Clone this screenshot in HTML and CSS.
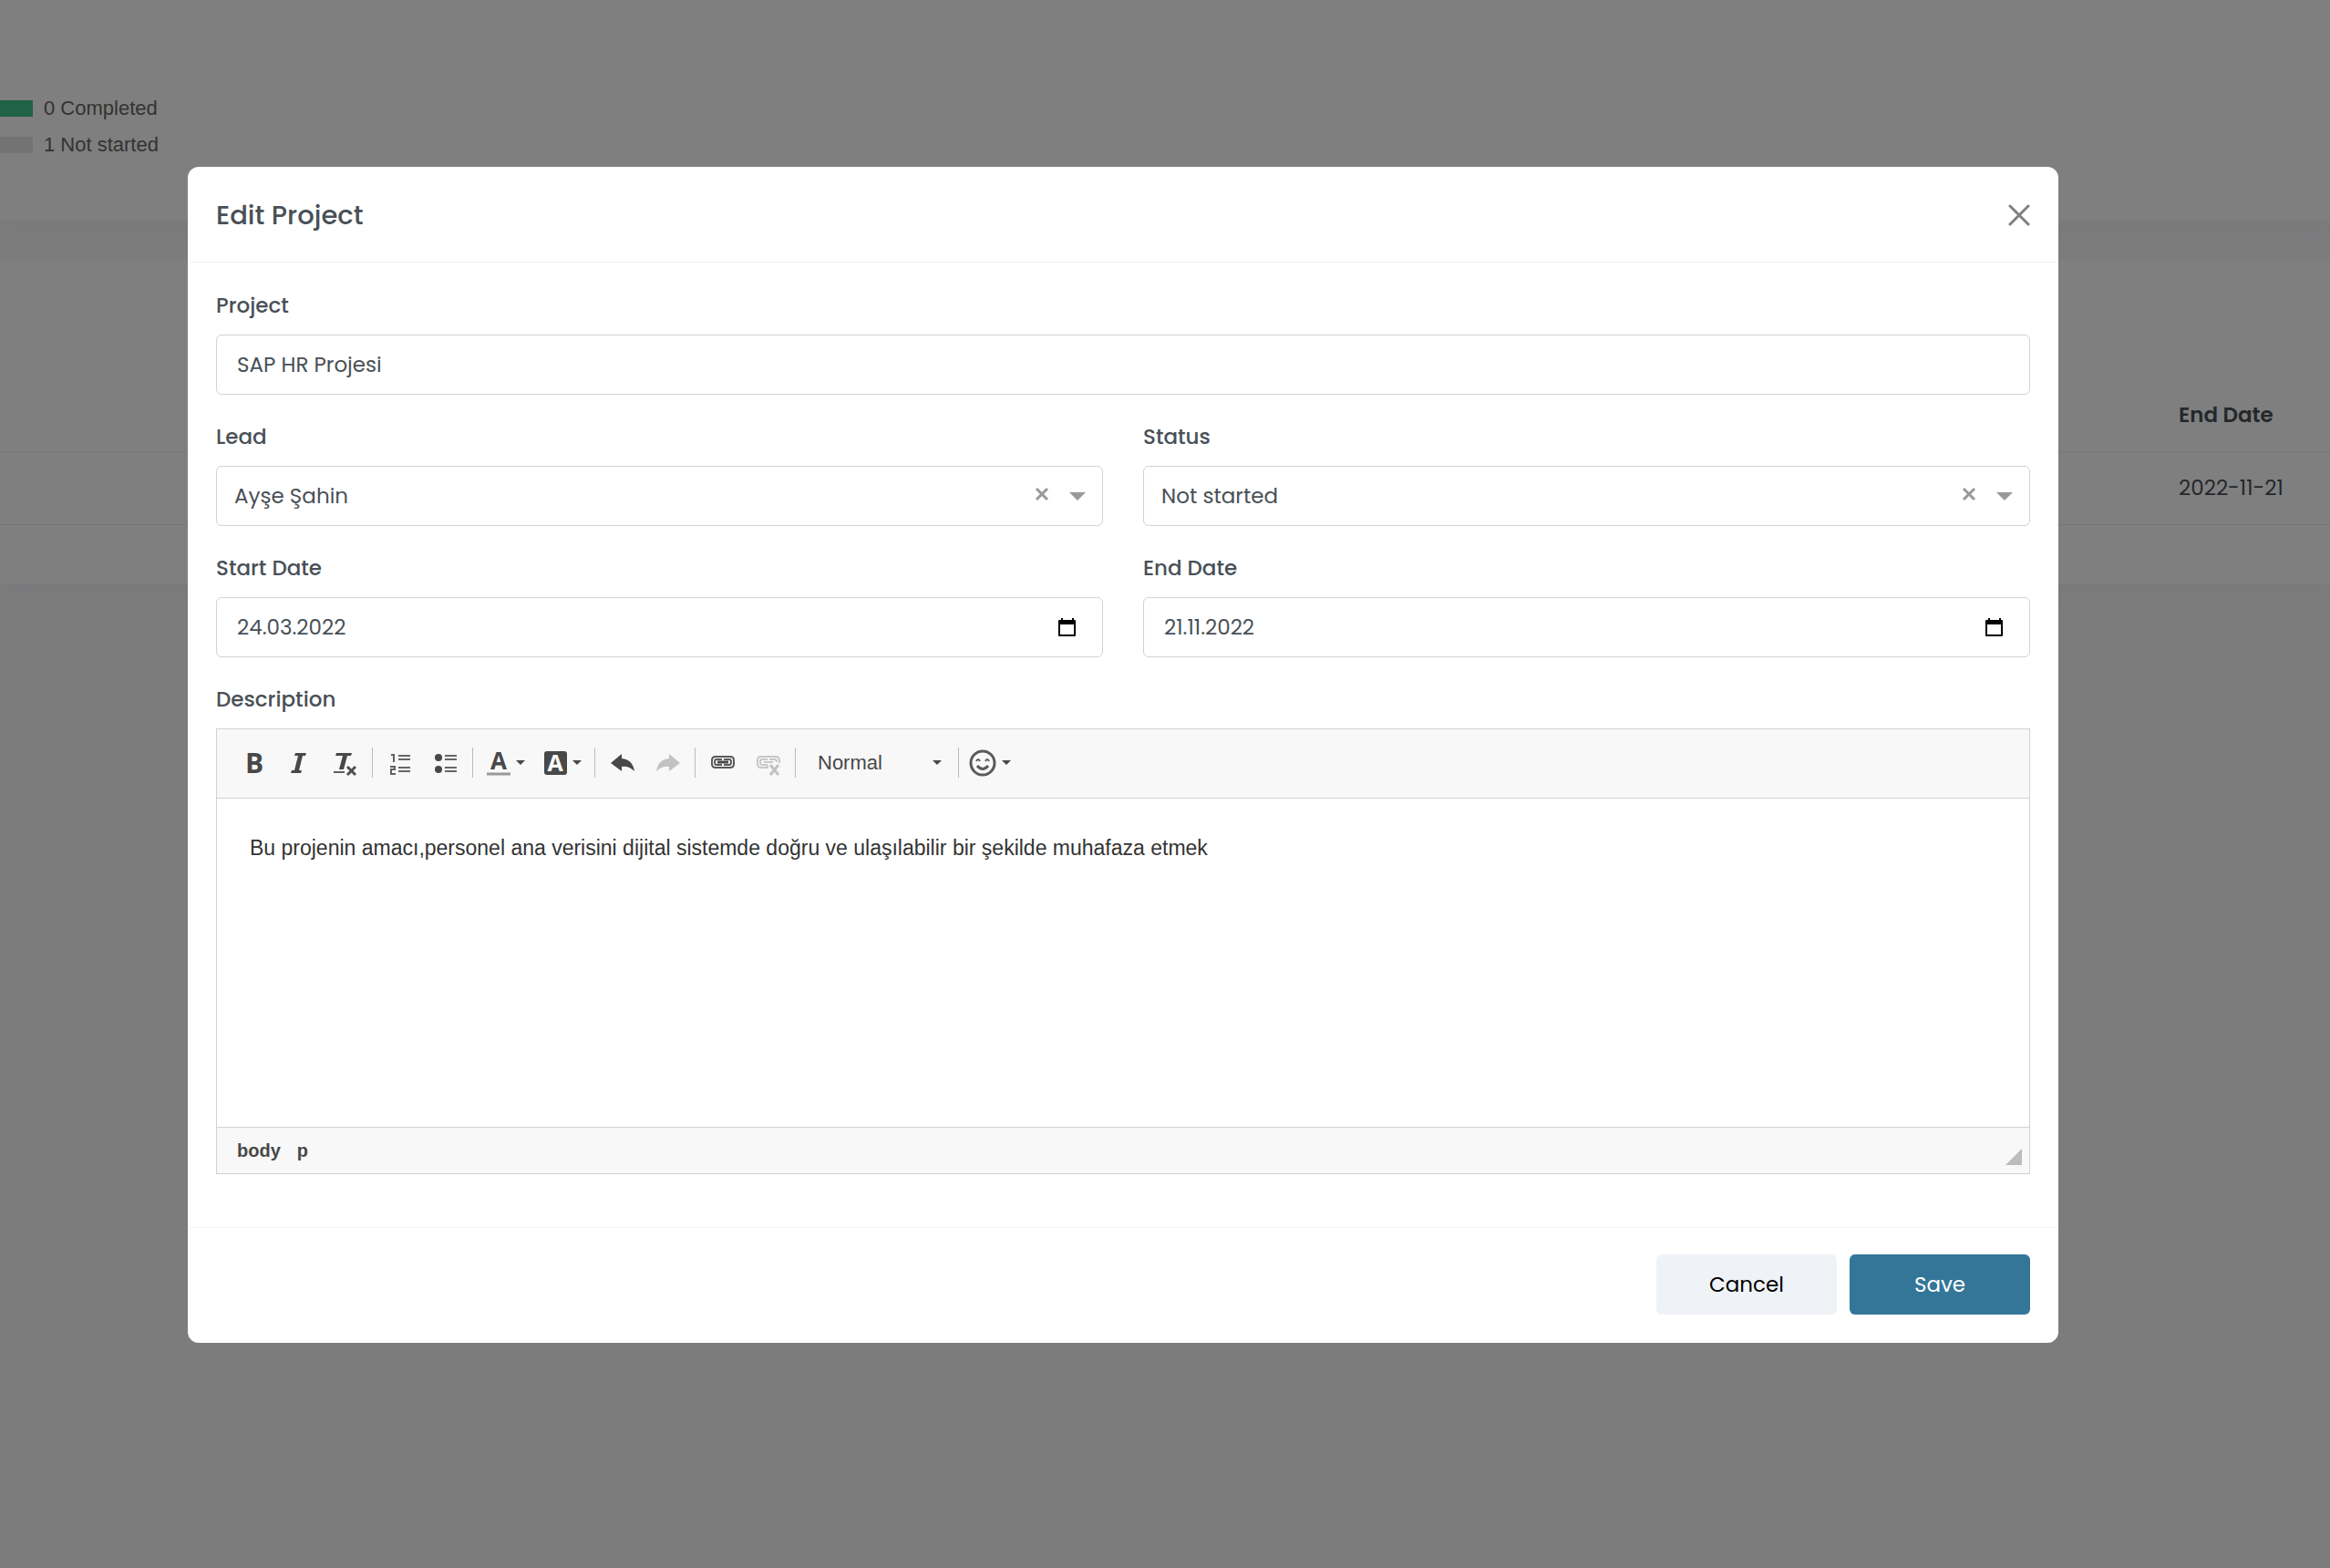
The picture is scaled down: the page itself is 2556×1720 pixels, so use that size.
FILE: index.html
```html
<!DOCTYPE html>
<html lang="en">
<head>
<meta charset="utf-8">
<title>Edit Project</title>
<link rel="stylesheet" href="styles.css">
</head>
<body>
<main class="page">
  <section class="card card-summary">
    <ul class="legend">
      <li><span class="swatch swatch-done"></span>0 Completed</li>
      <li><span class="swatch swatch-idle"></span>1 Not started</li>
    </ul>
  </section>
  <section class="card card-table">
    <table class="projects">
      <thead><tr><td></td><th scope="col">End Date</th></tr></thead>
      <tbody><tr><td></td><td>2022-11-21</td></tr></tbody>
    </table>
  </section>
</main>

<div class="backdrop">
  <form class="modal" role="dialog" aria-labelledby="modal-title">
    <header class="modal-header">
      <h1 id="modal-title">Edit Project</h1>
      <button type="button" class="close" aria-label="Close">
        <svg width="24" height="24" viewBox="0 0 24 24"><path d="M2 2 22 22M22 2 2 22" stroke="#7f7f7f" stroke-width="3" stroke-linecap="round"/></svg>
      </button>
    </header>

    <div class="modal-body">
      <div class="field field-wide">
        <label for="project">Project</label>
        <div class="control"><input id="project" type="text" value="SAP HR Projesi"></div>
      </div>
      <div class="field">
        <label for="lead">Lead</label>
        <div class="control control-select">
          <select id="lead"><option>Ayşe Şahin</option></select>
          <button type="button" class="clear" aria-label="Clear lead"><svg width="16" height="16" viewBox="0 0 16 16"><path d="M2 2 14 14M14 2 2 14" stroke="#999" stroke-width="3"/></svg></button>
          <svg class="arrow" width="18" height="9" viewBox="0 0 18 9"><path d="M0 0H18L9 9Z" fill="#999"/></svg>
        </div>
      </div>
      <div class="field">
        <label for="status">Status</label>
        <div class="control control-select">
          <select id="status"><option>Not started</option></select>
          <button type="button" class="clear" aria-label="Clear status"><svg width="16" height="16" viewBox="0 0 16 16"><path d="M2 2 14 14M14 2 2 14" stroke="#999" stroke-width="3"/></svg></button>
          <svg class="arrow" width="18" height="9" viewBox="0 0 18 9"><path d="M0 0H18L9 9Z" fill="#999"/></svg>
        </div>
      </div>
      <div class="field">
        <label for="start">Start Date</label>
        <div class="control control-date">
          <input id="start" type="text" value="24.03.2022">
          <button type="button" aria-label="Pick start date"><svg width="20" height="20" viewBox="0 0 20 20"><path fill-rule="evenodd" d="M3 0H5V2H15V0H17V2H18Q19 2 19 3V19Q19 20 18 20H1Q0 20 0 19V3Q0 2 1 2H3ZM2 7V18H17V7Z"/></svg></button>
        </div>
      </div>
      <div class="field">
        <label for="end">End Date</label>
        <div class="control control-date">
          <input id="end" type="text" value="21.11.2022">
          <button type="button" aria-label="Pick end date"><svg width="20" height="20" viewBox="0 0 20 20"><path fill-rule="evenodd" d="M3 0H5V2H15V0H17V2H18Q19 2 19 3V19Q19 20 18 20H1Q0 20 0 19V3Q0 2 1 2H3ZM2 7V18H17V7Z"/></svg></button>
        </div>
      </div>
      <div class="field field-wide">
        <label for="description">Description</label>
        <div class="editor">
          <div class="toolbar" role="toolbar" aria-label="Formatting">
            <button type="button" class="tool" aria-label="Bold"><svg class="icon" viewBox="0 0 26 26"><text class="glyph" x="13" y="24" text-anchor="middle" font-size="30">B</text></svg></button>
            <button type="button" class="tool" aria-label="Italic"><svg class="icon" viewBox="0 0 26 26"><path d="M8 2H20L19 5H16L12 21H15L14 24H3L4 21H7L11 5H7Z" fill="#484848"/></svg></button>
            <button type="button" class="tool" aria-label="Remove format"><svg class="icon" viewBox="0 0 26 26"><path d="M3 2H20L19 5H15L11 20H6L10 5H2Z" fill="#484848"/><path d="M0 23H12" stroke="#606060" stroke-width="2"/><path d="M15 17 24 26M24 17 15 26" stroke="#505050" stroke-width="3"/></svg></button>
            <span class="sep"></span>
            <button type="button" class="tool" aria-label="Numbered list"><svg class="icon" viewBox="0 0 26 26"><path d="M3 4H6V12M2 17H7V20H3V25H8" fill="none" stroke="#606060" stroke-width="2"/><path d="M11 5H24M11 9H24M11 18H24M11 22H24" stroke="#666" stroke-width="2"/></svg></button>
            <button type="button" class="tool" aria-label="Bulleted list"><svg class="icon" viewBox="0 0 26 26"><circle cx="5" cy="7" r="4" fill="#484848"/><circle cx="5" cy="20" r="4" fill="#484848"/><path d="M12 5H25M12 9H25M12 18H25M12 22H25" stroke="#666" stroke-width="2"/></svg></button>
            <span class="sep"></span>
            <button type="button" class="tool tool-menu" aria-label="Text color"><svg class="icon" viewBox="0 0 26 26"><text class="glyph" x="13" y="20" text-anchor="middle" font-size="26">A</text><path d="M0 25H26" stroke="#999" stroke-width="3"/></svg><svg class="caret" viewBox="0 0 10 6"><path d="M0 0H10L5 5Z"/></svg></button>
            <button type="button" class="tool tool-menu" aria-label="Background color"><svg class="icon" viewBox="0 0 26 26"><rect x="1" y="0" width="25" height="26" rx="3" fill="#484848"/><text class="glyph glyph-light" x="13" y="22" text-anchor="middle" font-size="25">A</text></svg><svg class="caret" viewBox="0 0 10 6"><path d="M0 0H10L5 5Z"/></svg></button>
            <span class="sep"></span>
            <button type="button" class="tool" aria-label="Undo"><svg class="icon" viewBox="0 0 26 26"><path d="M0 13 12 3V8Q24 9 26 22Q20 16 12 17V22Z" fill="#484848"/></svg></button>
            <button type="button" class="tool" aria-label="Redo" disabled><svg class="icon" viewBox="0 0 26 26"><path d="M26 13 14 3V8Q2 9 0 22Q6 16 14 17V22Z" fill="#c2c2c2"/></svg></button>
            <span class="sep"></span>
            <button type="button" class="tool" aria-label="Link"><svg class="icon" viewBox="0 0 26 26"><g fill="none" stroke="#5a5a5a" stroke-width="2"><path d="M12 7V6H5Q1 6 1 10V14Q1 18 5 18H12V17M14 7V6H21Q25 6 25 10V14Q25 18 21 18H14V17"/><path d="M12 9H6Q4 9 4 12T6 15H12M14 9H20Q22 9 22 12T20 15H14"/></g><path d="M7 12H19" stroke="#484848" stroke-width="3"/></svg></button>
            <button type="button" class="tool" aria-label="Unlink" disabled><svg class="icon" viewBox="0 0 26 26"><g fill="none" stroke="#c8c8c8" stroke-width="2"><path d="M12 7V6H5Q1 6 1 10V14Q1 18 5 18H12V16M14 7V6H21Q25 6 25 10V13M12 9H6Q4 9 4 12T6 15H12M14 9H20Q22 9 22 12M8 12H18"/></g><path d="M15 15 24 26M24 15 15 26" stroke="#c2c2c2" stroke-width="3"/></svg></button>
            <span class="sep"></span>
            <div class="format">
              <select aria-label="Paragraph format"><option>Normal</option></select>
              <svg class="caret" viewBox="0 0 10 6"><path d="M0 0H10L5 5Z"/></svg>
            </div>
            <span class="sep"></span>
            <button type="button" class="tool tool-menu tool-emoji" aria-label="Emoji"><svg class="icon icon-smile" viewBox="0 0 30 30"><g fill="none" stroke="#5a5a5a"><circle cx="15" cy="15" r="13" stroke-width="3"/><path d="M8 13Q10 9 12 13M18 13Q20 9 22 13" stroke-width="2"/><path d="M9 18Q15 25 21 18" stroke-width="3"/></g></svg><svg class="caret" viewBox="0 0 10 6"><path d="M0 0H10L5 5Z"/></svg></button>
          </div>
          <textarea id="description" spellcheck="false">Bu projenin amacı,personel ana verisini dijital sistemde doğru ve ulaşılabilir bir şekilde muhafaza etmek</textarea>
          <div class="path-bar">
            <a href="#body">body</a>
            <a href="#p">p</a>
            <svg class="grip" width="18" height="18" viewBox="0 0 18 18"><path d="M18 0V18H0Z" fill="#bcbcbc"/></svg>
          </div>
        </div>
      </div>
    </div>

    <footer class="modal-footer">
      <button type="button" class="btn btn-light">Cancel</button>
      <button type="submit" class="btn btn-primary">Save</button>
    </footer>
  </form>
</div>
</body>
</html>
```

FILE: styles.css
```css
* { box-sizing: border-box; }

body {
  margin: 0;
  min-height: 100vh;
  background: #f8f8fb;
  color: #495057;
  font: 400 23px/36px Poppins, Inter, sans-serif;
}

button, input, select, textarea { font: inherit; color: inherit; }

button {
  padding: 0;
  border: 0;
  background: none;
  cursor: pointer;
}

svg { display: block; }

/* Page behind the dialog */
.card { background: #fff; box-shadow: 0 12px 24px rgba(18, 38, 63, 0.02); }
.card-summary { height: 242px; padding-top: 101px; }
.card-table { margin-top: 43px; padding: 130px 0 65px; }

.legend {
  display: grid;
  gap: 4px;
  margin: 0;
  padding: 0;
  list-style: none;
  color: #666;
  font: 22px/36px "Liberation Sans", Arial, sans-serif;
}
.legend li { display: flex; align-items: center; gap: 12px; }
.swatch { width: 36px; height: 18px; }
.swatch-done { background: #3fc48f; }
.swatch-idle { background: #e6e6e6; }

.projects { width: 100%; border-collapse: collapse; }
.projects th, .projects td {
  height: 80px;
  padding: 0;
  border-bottom: 1px solid #e9edf3;
  text-align: left;
}
.projects th { width: 166px; font-weight: 600; }

/* Dialog */
.backdrop {
  position: fixed;
  inset: 0;
  overflow: auto;
  padding: 183px 298px 0 206px;
  background: rgba(0, 0, 0, 0.5);
}
.modal {
  border: 2px solid #fff;
  border-radius: 12px;
  background: #fff;
}
.modal-header {
  display: flex;
  align-items: center;
  justify-content: space-between;
  height: 103px;
  padding: 0 29px;
  border-bottom: 1px solid #f0f0f3;
}
.modal-header h1 { margin: 0; font-size: 29px; font-weight: 500; }

.modal-body {
  display: grid;
  grid-template-columns: 1fr 1fr;
  gap: 28px 44px;
  padding: 29px 29px 58px;
}
.field-wide { grid-column: 1 / -1; }
.field > label { display: block; margin-bottom: 14px; font-weight: 500; }

.control {
  display: flex;
  align-items: center;
  height: 66px;
  border: 1px solid #ced4da;
  border-radius: 6px;
  background: #fff;
}
.control input, .control select {
  flex: 1;
  min-width: 0;
  height: 100%;
  padding: 0 22px;
  border: 0;
  outline: 0;
  background: none;
}
.control select { appearance: none; padding: 0 19px; }
.control-select { gap: 22px; padding-right: 18px; }
.control-date { padding-right: 28px; }
.control-date svg { fill: #000; }
.clear { padding-bottom: 4px; }

/* Rich text editor */
.editor {
  border: 1px solid #d1d1d1;
  font: 23px/36px "Liberation Sans", Arial, sans-serif;
}
.toolbar {
  display: flex;
  align-items: center;
  height: 76px;
  padding: 0 16px 2px;
  border-bottom: 1px solid #d1d1d1;
  background: #f8f8f8;
}
.tool { display: flex; align-items: center; justify-content: center; width: 50px; height: 50px; }
.tool-menu { gap: 6px; width: 62px; }
.tool-emoji { width: 58px; }
.icon { width: 26px; height: 26px; overflow: visible; }
.icon-smile { width: 30px; height: 30px; }
.caret { width: 10px; height: 6px; fill: #484848; }
.glyph { fill: #484848; font-family: "Open Sans", sans-serif; font-weight: 700; }
.glyph-light { fill: #f8f8f8; }
.sep { width: 1px; height: 33px; margin: 0 5px 0 4px; background: #bcbcbc; }
.format { display: flex; align-items: center; width: 169px; padding: 0 14px 0 19px; color: #484848; font-size: 22px; }
.format select {
  flex: 1;
  min-width: 0;
  padding: 0;
  appearance: none;
  border: 0;
  background: none;
}
.editor textarea {
  display: block;
  width: 100%;
  height: 360px;
  padding: 36px;
  resize: none;
  border: 0;
  outline: 0;
  color: #333;
}
.path-bar {
  display: flex;
  align-items: center;
  gap: 18px;
  height: 51px;
  padding: 0 8px 0 22px;
  border-top: 1px solid #d1d1d1;
  background: #f8f8f8;
  font-size: 20px;
}
.path-bar a { color: #484848; font-weight: 700; text-decoration: none; }
.grip { align-self: flex-end; margin: 0 0 9px auto; }

.modal-footer {
  display: flex;
  justify-content: flex-end;
  gap: 14px;
  padding: 29px;
  border-top: 1px solid #eff2f7;
}
.btn { width: 198px; height: 66px; border-radius: 6px; }
.btn-light { background: #eff2f7; color: #000; }
.btn-primary { background: #347698; color: #fff; }
```
